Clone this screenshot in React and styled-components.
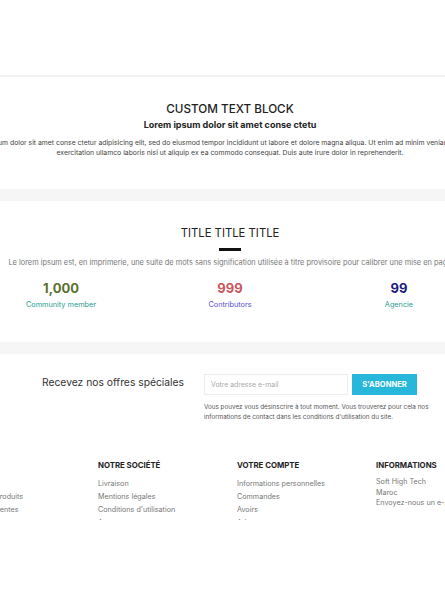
import React from "react";
import styled, { createGlobalStyle } from "styled-components";

const GlobalStyle = createGlobalStyle`
  html, body {
    margin: 0;
    padding: 0;
    background: #ffffff;
  }
  body {
    font-family: Inter, "Noto Sans", "Liberation Sans", sans-serif;
    color: #333;
  }
`;

//data
const stats = [
  { value: "1,000", label: "Community member", color: "#5c6f2f", labelColor: "#1f9e91" },
  { value: "999", label: "Contributors", color: "#c9575b", labelColor: "#5b4fd8" },
  { value: "99", label: "Agencie", color: "#1c1c80", labelColor: "#1f9e91" },
];

const footerColumns = [
  { title: "PRODUITS", links: ["Promotions", "Nouveaux produits", "Meilleures ventes"] },
  {
    title: "NOTRE SOCIÉTÉ",
    links: ["Livraison", "Mentions légales", "Conditions d'utilisation", "A propos"],
  },
  {
    title: "VOTRE COMPTE",
    links: ["Informations personnelles", "Commandes", "Avoirs", "Adresses"],
  },
  {
    title: "INFORMATIONS",
    lines: ["Soft High Tech", "Maroc", "Envoyez-nous un e-mail"],
  },
];

const App = () => {
  return (
    <Viewport>
      <GlobalStyle />
      <Page>
        <HeaderSpace />
        <Divider />

        <CustomBlock>
          <BlockTitle>CUSTOM TEXT BLOCK</BlockTitle>
          <BlockSubtitle>Lorem ipsum dolor sit amet conse ctetu</BlockSubtitle>
          <BlockText>
            Lorem ipsum dolor sit amet conse ctetur adipisicing elit, sed do eiusmod tempor
            incididunt ut labore et dolore magna aliqua. Ut enim ad minim veniam, quis nostrud
            <br />
            exercitation ullamco laboris nisi ut aliquip ex ea commodo consequat. Duis aute irure
            dolor in reprehenderit.
          </BlockText>
        </CustomBlock>

        <Band />

        <StatsSection>
          <SectionTitle>TITLE TITLE TITLE</SectionTitle>
          <TitleBar />
          <SectionText>
            Le lorem ipsum est, en imprimerie, une suite de mots sans signification utilisée à
            titre provisoire pour calibrer une mise en page
          </SectionText>
          <StatsGrid>
            {stats.map(({ value, label, color, labelColor }) => (
              <Stat key={label}>
                <StatValue $color={color}>{value}</StatValue>
                <StatLabel $color={labelColor}>{label}</StatLabel>
              </Stat>
            ))}
          </StatsGrid>
        </StatsSection>

        <Band />

        <Newsletter>
          <NewsTitle>Recevez nos offres spéciales</NewsTitle>
          <NewsForm>
            <FormRow>
              <EmailInput placeholder="Votre adresse e-mail" />
              <SubscribeBtn>S'ABONNER</SubscribeBtn>
            </FormRow>
            <NewsNote>
              Vous pouvez vous désinscrire à tout moment. Vous trouverez pour cela nos
              <br />
              informations de contact dans les conditions d'utilisation du site.
            </NewsNote>
          </NewsForm>
        </Newsletter>

        <FooterWrap>
          <FooterGrid>
            {footerColumns.map(({ title, links, lines }) => (
              <FooterCol key={title}>
                <FooterTitle>{title}</FooterTitle>
                {links && (
                  <LinkList>
                    {links.map((l) => (
                      <li key={l}>{l}</li>
                    ))}
                  </LinkList>
                )}
                {lines && (
                  <InfoBlock>
                    {lines.map((l) => (
                      <div key={l}>{l}</div>
                    ))}
                  </InfoBlock>
                )}
              </FooterCol>
            ))}
          </FooterGrid>
        </FooterWrap>
      </Page>
    </Viewport>
  );
};

export default App;

const Viewport = styled.div`
  width: 445px;
  height: 595px;
  overflow: hidden;
  background: #fff;
`;

const Page = styled.div`
  width: 460px;
  height: 520px;
  overflow: hidden;
  display: flex;
  flex-direction: column;
`;

const HeaderSpace = styled.div`
  height: 75px;
  flex-shrink: 0;
`;

const Divider = styled.div`
  height: 2px;
  background: #f2f2f2;
  flex-shrink: 0;
`;

const Band = styled.div`
  height: 12px;
  background: #f6f6f6;
  flex-shrink: 0;
`;

const CustomBlock = styled.section`
  height: 112px;
  flex-shrink: 0;
  display: flex;
  flex-direction: column;
  align-items: center;
  padding-top: 24px;
  box-sizing: border-box;
`;

const BlockTitle = styled.h2`
  margin: 0;
  font-size: 11.7px;
  font-weight: 500;
  color: #222;
  line-height: 16px;
`;

const BlockSubtitle = styled.h3`
  margin: 1px 0 0;
  font-size: 9px;
  font-weight: 700;
  color: #222;
  line-height: 14px;
`;

const BlockText = styled.p`
  margin: 6px 0 0;
  font-size: 6.85px;
  line-height: 10px;
  color: #444;
  text-align: center;
  white-space: nowrap;
`;

const StatsSection = styled.section`
  height: 141px;
  flex-shrink: 0;
  display: flex;
  flex-direction: column;
  align-items: center;
  padding-top: 24px;
  box-sizing: border-box;
`;

const SectionTitle = styled.h2`
  margin: 0;
  font-size: 11.3px;
  font-weight: 400;
  color: #222;
  line-height: 16px;
`;

const TitleBar = styled.div`
  width: 22px;
  height: 3px;
  background: #111;
  margin-top: 7px;
`;

const SectionText = styled.p`
  margin: 7px 0 0;
  font-size: 7.4px;
  line-height: 10px;
  color: #777;
  white-space: nowrap;
`;

const StatsGrid = styled.div`
  display: grid;
  grid-template-columns: repeat(3, 169px);
  flex-shrink: 0;
  margin-top: 12px;
`;

const Stat = styled.div`
  display: flex;
  flex-direction: column;
  align-items: center;
`;

const StatValue = styled.div`
  font-size: 13px;
  font-weight: 700;
  line-height: 16px;
  color: ${(p) => p.$color};
`;

const StatLabel = styled.div`
  font-size: 7.3px;
  line-height: 11px;
  margin-top: 3px;
  color: ${(p) => p.$color};
`;

const Newsletter = styled.section`
  display: flex;
  flex-shrink: 0;
  padding: 20px 0 0 42px;
  height: 105px;
  box-sizing: border-box;
`;

const NewsTitle = styled.h3`
  margin: 0;
  width: 162px;
  font-size: 10.3px;
  font-weight: 400;
  color: #333;
  line-height: 14px;
  padding-top: 1px;
`;

const NewsForm = styled.div`
  display: flex;
  flex-direction: column;
`;

const FormRow = styled.div`
  display: flex;
  gap: 4px;
`;

const EmailInput = styled.input`
  width: 144px;
  height: 21px;
  box-sizing: border-box;
  border: 1px solid #ececec;
  background: #fff;
  padding: 0 6px;
  font-family: inherit;
  font-size: 6.9px;
  outline: none;
  &::placeholder {
    color: #aaa;
  }
`;

const SubscribeBtn = styled.button`
  width: 65px;
  height: 21px;
  border: none;
  background: #27b7da;
  color: #fff;
  font-family: inherit;
  font-weight: 700;
  font-size: 7.6px;
  padding: 0;
`;

const NewsNote = styled.p`
  margin: 8px 0 0;
  font-size: 6.3px;
  line-height: 9.5px;
  color: #555;
  white-space: nowrap;
`;

const FooterWrap = styled.footer`
  display: flex;
  justify-content: center;
  flex-shrink: 0;
`;

const FooterGrid = styled.div`
  display: grid;
  grid-template-columns: repeat(4, 139px);
  width: 542px;
  flex-shrink: 0;
`;

const FooterCol = styled.div`
  display: flex;
  flex-direction: column;
`;

const FooterTitle = styled.h4`
  margin: 0;
  font-size: 7.8px;
  font-weight: 700;
  color: #222;
  line-height: 12px;
  white-space: nowrap;
`;

const LinkList = styled.ul`
  list-style: none;
  margin: 6px 0 0;
  padding: 0;
  font-size: 7.2px;
  line-height: 13px;
  color: #777;
  white-space: nowrap;
`;

const InfoBlock = styled.div`
  margin-top: 6px;
  font-size: 7.2px;
  line-height: 10.5px;
  color: #777;
  white-space: nowrap;
`;
